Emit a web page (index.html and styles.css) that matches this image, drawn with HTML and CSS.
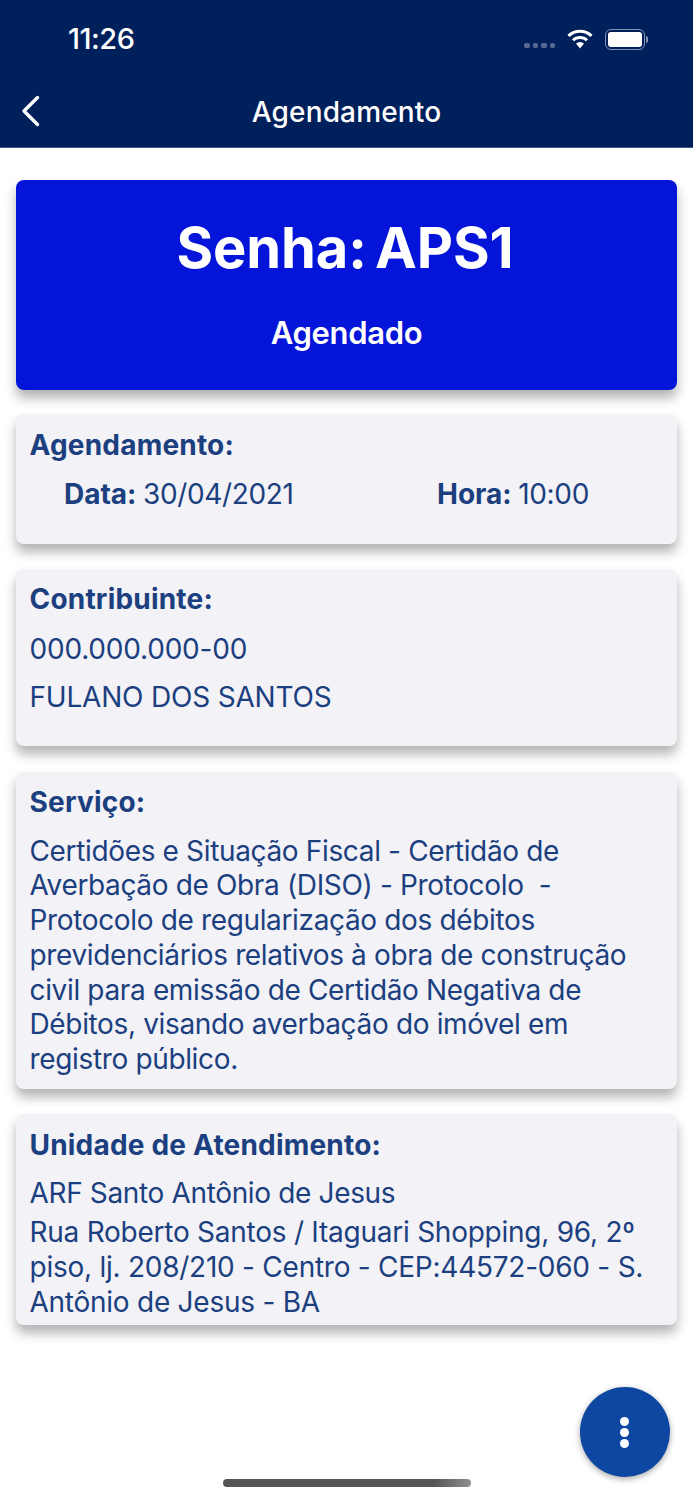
FILE: index.html
```html
<!DOCTYPE html>
<html lang="en">
<head>
    <meta charset="UTF-8">
    <meta name="viewport" content="width=device-width, initial-scale=1.0">
    <title>Agendamento</title>
    <link rel="stylesheet" href="styles.css">
</head>
<body>

<div class="header">
    <div class="status-bar">
        <span class="time">11:26</span>
        <div class="status-icons">
            <div class="signal"><i></i><i></i><i></i><i></i></div>
            <svg class="wifi" width="28" height="20" viewBox="0 0 26 20">
                <path d="M1.5 6.8 A16.5 16.5 0 0 1 24.5 6.8" fill="none" stroke="#fff" stroke-width="3"/>
                <path d="M6 11.3 A10 10 0 0 1 20 11.3" fill="none" stroke="#fff" stroke-width="3"/>
                <path d="M9 14.6 A6 6 0 0 1 17 14.6 L13 19.5 Z" fill="#fff"/>
            </svg>
            <div class="battery"><div class="battery-level"></div></div>
            <div class="battery-cap"></div>
        </div>
    </div>
    <div class="nav-bar">
        <svg class="back" width="20" height="32" viewBox="0 0 20 32">
            <path d="M16.5 2.5 L3 16 L16.5 29.5" fill="none" stroke="#fff" stroke-width="3.4" stroke-linecap="round" stroke-linejoin="round"/>
        </svg>
        <span class="nav-title">Agendamento</span>
    </div>
</div>

<div class="content">
    <div class="hero">
        <div class="hero-title">Senha: APS1</div>
        <div class="hero-status">Agendado</div>
    </div>

    <div class="card card-schedule">
        <div class="card-title">Agendamento:</div>
        <div class="schedule-row">
            <div><b>Data:</b> 30/04/2021</div>
            <div><b>Hora:</b> 10:00</div>
        </div>
    </div>

    <div class="card card-person">
        <div class="card-title">Contribuinte:</div>
        <div class="line">000.000.000-00</div>
        <div class="line">FULANO DOS SANTOS</div>
    </div>

    <div class="card card-service">
        <div class="card-title">Serviço:</div>
        <div class="text">Certidões e Situação Fiscal - Certidão de<br>Averbação de Obra (DISO) - Protocolo &nbsp;-<br>Protocolo de regularização dos débitos<br>previdenciários relativos à obra de construção<br>civil para emissão de Certidão Negativa de<br>Débitos, visando averbação do imóvel em<br>registro público.</div>
    </div>

    <div class="card card-unit">
        <div class="card-title">Unidade de Atendimento:</div>
        <div class="line">ARF Santo Antônio de Jesus</div>
        <div class="text">Rua Roberto Santos / Itaguari Shopping, 96, 2º<br>piso, lj. 208/210 - Centro - CEP:44572-060 - S.<br>Antônio de Jesus - BA</div>
    </div>
</div>

<button class="fab">
    <span></span><span></span><span></span>
</button>
<div class="home-indicator"></div>

</body>
</html>
```

FILE: styles.css
```css
* {
    box-sizing: border-box;
}
body {
    margin: 0;
    height: 1500px;
    overflow: hidden;
    position: relative;
    background-color: #ffffff;
    font-family: Inter, "Liberation Sans", sans-serif;
    color: #1b3f7f;
}
.header {
    height: 148px;
    background-color: #00205b;
    border-bottom: 1px solid #3a5486;
    color: #ffffff;
}
.status-bar {
    height: 78px;
    padding: 22px 45px 0 68px;
    display: flex;
    justify-content: space-between;
    align-items: flex-start;
}
.time {
    font-size: 29px;
    font-weight: 500;
    line-height: 34px;
    letter-spacing: -0.5px;
}
.status-icons {
    display: flex;
    align-items: center;
    height: 34px;
}
.signal {
    display: flex;
    gap: 3px;
    margin: 13px 11px 0 0;
}
.signal i {
    width: 5.5px;
    height: 5.5px;
    border-radius: 2px;
    background-color: #566a94;
}
.wifi {
    margin-right: 11px;
}
.battery {
    width: 40px;
    height: 21px;
    padding: 2px;
    border: 1.5px solid #8492b0;
    border-radius: 6px;
}
.battery-level {
    height: 100%;
    border-radius: 3px;
    background-color: #ffffff;
}
.battery-cap {
    width: 2px;
    height: 7px;
    margin-left: 1px;
    border-radius: 0 2px 2px 0;
    background-color: #8492b0;
}
.nav-bar {
    height: 69px;
    position: relative;
    display: flex;
    justify-content: center;
    align-items: center;
}
.back {
    position: absolute;
    left: 21px;
    top: 17px;
}
.nav-title {
    font-size: 28px;
    font-weight: 500;
    letter-spacing: 0.15px;
    margin-top: -2px;
}
.content {
    padding: 32px 16px 0;
}
.hero {
    height: 210px;
    margin-bottom: 24px;
    padding-top: 34px;
    border-radius: 8px;
    background-color: #0414d8;
    box-shadow: 0 8px 12px rgba(0, 0, 0, 0.3);
    color: #ffffff;
    text-align: center;
}
.hero-title {
    padding-right: 3px;
    font-size: 56px;
    font-weight: 700;
    line-height: 68px;
    letter-spacing: -0.1px;
    word-spacing: -5px;
}
.hero-status {
    margin-top: 32px;
    font-size: 31px;
    font-weight: 600;
    line-height: 38px;
    letter-spacing: -0.3px;
}
.card {
    margin-bottom: 25px;
    padding: 14px 13.5px 0;
    border-radius: 8px;
    background-color: #f2f2f7;
    box-shadow: 0 8px 12px rgba(0, 0, 0, 0.3);
    font-size: 28px;
    line-height: 34.7px;
    letter-spacing: -0.35px;
}
.card-schedule {
    height: 130px;
}
.card-person {
    height: 177px;
    margin-bottom: 26px;
    padding-top: 13px;
}
.card-person .card-title {
    margin-bottom: 15px;
}
.card-person .line {
    letter-spacing: -0.2px;
}
.card-service {
    height: 317px;
    padding-top: 13px;
}
.card-unit {
    height: 211px;
}
.card-unit .card-title {
    margin-bottom: 13px;
}
.card-unit .text {
    letter-spacing: -0.25px;
}
.card-title {
    font-weight: 700;
    letter-spacing: 0.2px;
    margin-bottom: 14px;
}
.schedule-row {
    display: grid;
    grid-template-columns: 373px 1fr;
    padding-left: 34.5px;
}
.schedule-row b {
    font-weight: 700;
    letter-spacing: 0;
    margin-right: -1px;
}
.line {
    margin-bottom: 14px;
}
.card-unit .line {
    margin-bottom: 5px;
}
.fab {
    position: absolute;
    left: 580px;
    top: 1387px;
    width: 90px;
    height: 90px;
    padding: 0;
    border: none;
    border-radius: 50%;
    background-color: #0d47a1;
    box-shadow: 0 2px 6px rgba(0, 0, 0, 0.35);
    display: flex;
    flex-direction: column;
    align-items: center;
    justify-content: center;
    gap: 2px;
}
.fab span {
    width: 9px;
    height: 9px;
    border-radius: 50%;
    background-color: #ffffff;
    margin-right: 1px;
}
.home-indicator {
    position: absolute;
    left: 223px;
    top: 1479px;
    width: 248px;
    height: 8px;
    border-radius: 4px;
    background: linear-gradient(to right, #555555 85%, #8f8f8f);
}
```
